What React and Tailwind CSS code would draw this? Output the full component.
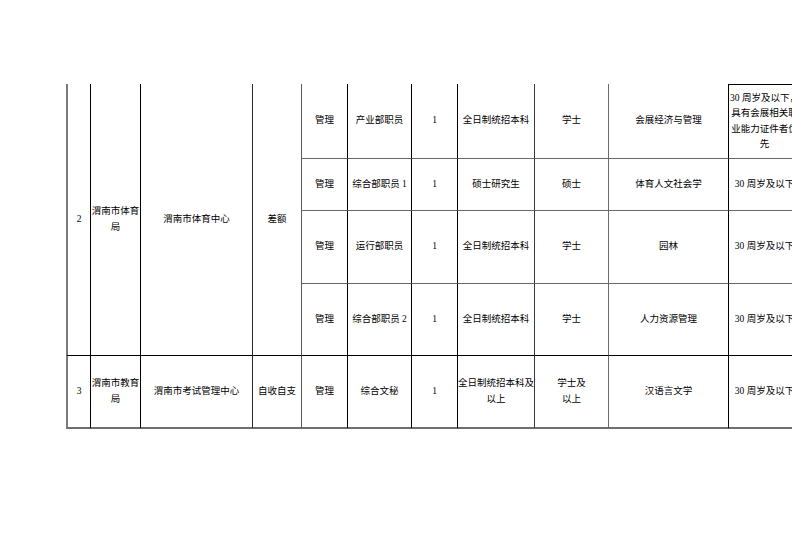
import React from "react";

// vertical line colour on the right edge of each column
const rightLine = [
  "border-r-black",
  "border-r-black",
  "border-r-[#2a2a2a]",
  "border-r-[#5a5a5a]",
  "border-r-black",
  "border-r-black",
  "border-r-black",
  "border-r-[#3a3a3a]",
  "border-r-[#6b6b6b]",
  "border-r-black",
  "border-r-black",
];

const group2 = [
  ["管理", "产业部职员", "1", "全日制统招本科", "学士", "会展经济与管理", ["30 周岁及以下，", "具有会展相关职", "业能力证件者优", "先"]],
  ["管理", "综合部职员 1", "1", "硕士研究生", "硕士", "体育人文社会学", "30 周岁及以下"],
  ["管理", "运行部职员", "1", "全日制统招本科", "学士", "园林", "30 周岁及以下"],
  ["管理", "综合部职员 2", "1", "全日制统招本科", "学士", "人力资源管理", "30 周岁及以下"],
];

const group3 = ["3", ["渭南市教育", "局"], "渭南市考试管理中心", "自收自支", "管理", "综合文秘", "1", ["全日制统招本科及", "以上"], ["学士及", "以上"], "汉语言文学", "30 周岁及以下"];

function Text({ value }) {
  if (Array.isArray(value)) {
    return (
      <span>
        {value.map((line, i) => (
          <span key={i} className="block whitespace-nowrap">
            {line}
          </span>
        ))}
      </span>
    );
  }
  return <span className="whitespace-nowrap">{value}</span>;
}

function Cell({ value, col, bottom, extra = "" }) {
  return (
    <div
      className={`flex items-center justify-center text-center border-r ${rightLine[col]} ${bottom} ${extra} ${
        col === 0 ? "border-l-2 border-l-[#7a7a7a]" : ""
      }`}
    >
      <Text value={value} />
    </div>
  );
}

export default function App() {
  const left2 = ["2", ["渭南市体育", "局"], "渭南市体育中心", "差额"];

  return (
    <div className="w-[792px] h-[560px] overflow-hidden bg-white">
      <div
        className="pt-[84px] pl-[66px] text-[9.5px] leading-[15.5px] text-black"
        style={{ fontFamily: '"Liberation Serif", "Noto Sans CJK SC", serif' }}
      >
        <div className="grid w-[735px] grid-cols-[25px_50px_112px_49px_46px_64px_46px_77px_74px_120px_72px] grid-rows-[75px_52px_73px_72px_73px]">
          {left2.map((v, i) => (
            <div key={"l" + i} className="row-span-4 flex">
              <div className="flex-1 flex">
                <Cell value={v} col={i} bottom="border-b border-b-black" extra="flex-1" />
              </div>
            </div>
          ))}
          {group2.map((row, r) =>
            row.map((v, c) => (
              <Cell
                key={r + "-" + c}
                value={v}
                col={c + 4}
                bottom={r === 3 ? "border-b border-b-black" : "border-b border-b-[#686868]"}
                extra={r === 0 && c === 6 ? "border-t border-t-black" : ""}
              />
            ))
          )}
          {group3.map((v, c) => (
            <Cell key={"g3-" + c} value={v} col={c} bottom="border-b-2 border-b-[#6e6e6e]" />
          ))}
        </div>
      </div>
    </div>
  );
}
